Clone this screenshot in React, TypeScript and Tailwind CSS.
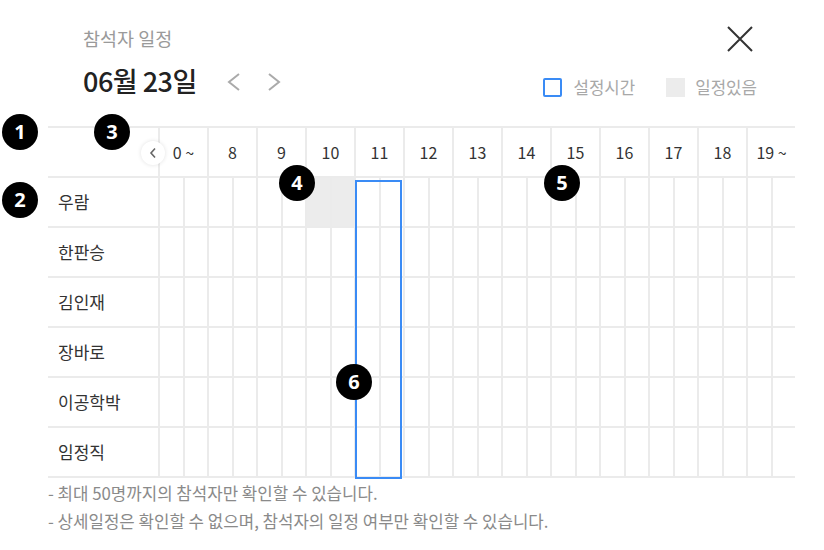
import React from "react";

const hours = ["0 ~", "8", "9", "10", "11", "12", "13", "14", "15", "16", "17", "18", "19 ~"];
const names = ["우람", "한판승", "김인재", "장바로", "이공학박", "임정직"];

function Badge({ n, x, y }: { n: number; x: number; y: number }) {
  return (
    <div
      className="absolute flex h-[36px] w-[36px] items-center justify-center rounded-full bg-black text-[20px] font-bold leading-none text-white"
      style={{ left: x - 18, top: y - 18, fontFamily: "'Open Sans', 'Noto Sans', sans-serif" }}
    >
      {n}
    </div>
  );
}

export default function App() {
  return (
    <div
      className="relative h-[550px] w-[824px] overflow-hidden bg-white"
      style={{ fontFamily: "'Noto Sans CJK KR', 'Noto Sans', sans-serif" }}
    >
      {/* Top area */}
      <div className="pl-[83px] pr-[71px] pt-[24px]">
        <div className="flex h-[28px] items-center justify-between">
          <div className="text-[18.5px] leading-[28px] text-[#9a9a9a]">참석자 일정</div>
          <svg width="26" height="26" viewBox="0 0 26 26" className="mt-[1px]">
            <path d="M1 1 L25 25 M25 1 L1 25" stroke="#333" strokeWidth="2" fill="none" />
          </svg>
        </div>
        <div className="mt-[8px] flex h-[40px] items-start justify-between">
          <div className="flex h-[40px] items-center">
            <span className="text-[27px] font-medium leading-none tracking-[-0.5px] text-[#222]">06월 23일</span>
            <svg width="16" height="18" viewBox="0 0 16 18" className="ml-[29px] mt-[4px]">
              <path d="M13 1 L3 9 L13 17" stroke="#aaa" strokeWidth="2" fill="none" />
            </svg>
            <svg width="16" height="18" viewBox="0 0 16 18" className="ml-[24px] mt-[4px]">
              <path d="M3 1 L13 9 L3 17" stroke="#aaa" strokeWidth="2" fill="none" />
            </svg>
          </div>
          <div className="mr-[-4px] mt-[17px] flex h-[20px] items-center">
            <div className="h-[19px] w-[19px] rounded-[2px] border-2 border-[#3a8bf5]" />
            <span className="ml-[11px] text-[16.8px] leading-none text-[#a8a8a8]">설정시간</span>
            <div className="ml-[31px] h-[19px] w-[19px] bg-[#ececec]" />
            <span className="ml-[10px] text-[16.8px] leading-none text-[#a8a8a8]">일정있음</span>
          </div>
        </div>
      </div>

      {/* Table */}
      <div className="ml-[48px] mt-[26px] w-[747px]">
        <div className="relative flex h-[52px] border-y-2 border-[#ebebeb]">
          <div className="w-[110px]" />
          {hours.map((h) => (
            <div
              key={h}
              className="flex w-[49px] items-center justify-center border-l-2 border-[#ebebeb] text-[16px] text-[#333]"
            >
              {h}
            </div>
          ))}
          <div className="absolute left-[93px] top-[13px] flex h-[24px] w-[24px] items-center justify-center rounded-full bg-white shadow-[0_0_4px_rgba(0,0,0,0.12)]">
            <svg width="8" height="12" viewBox="0 0 8 12">
              <path d="M6 1.5 L2 6 L6 10.5" stroke="#666" strokeWidth="1.6" fill="none" />
            </svg>
          </div>
        </div>
        <div className="relative">
          {names.map((nm, r) => (
            <div key={nm} className="flex h-[50px] border-b-2 border-[#ebebeb]">
              <div className="flex w-[110px] items-center pl-[10px] text-[17px] text-[#333]">{nm}</div>
              <div className="grid grid-cols-[repeat(26,24.5px)]">
                {Array.from({ length: 26 }).map((_, c) => (
                  <div
                    key={c}
                    className={
                      "border-l-2 border-[#ebebeb] " + (r === 0 && (c === 6 || c === 7) ? "bg-[#ececec]" : "bg-white")
                    }
                  />
                ))}
              </div>
            </div>
          ))}
          <div className="absolute left-[307px] top-[2px] h-[299px] w-[47px] border-2 border-[#3a8bf5]" />
        </div>
        <div className="pt-[1px] text-[16.8px] leading-[28px] text-[#8a8a8a]">
          <div>- 최대 50명까지의 참석자만 확인할 수 있습니다.</div>
          <div>- 상세일정은 확인할 수 없으며, 참석자의 일정 여부만 확인할 수 있습니다.</div>
        </div>
      </div>

      <Badge n={1} x={20} y={132} />
      <Badge n={3} x={112} y={132} />
      <Badge n={2} x={20} y={200} />
      <Badge n={4} x={297} y={183} />
      <Badge n={5} x={562} y={183} />
      <Badge n={6} x={354} y={382} />
    </div>
  );
}
